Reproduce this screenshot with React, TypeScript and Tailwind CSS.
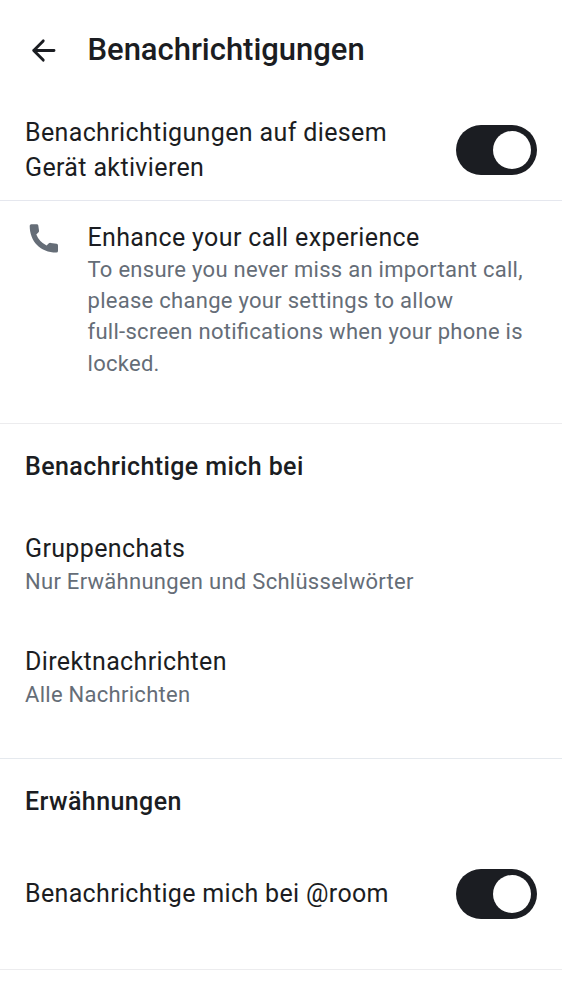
import type { ReactNode } from "react";

function Toggle() {
  return (
    <div role="switch" aria-checked="true" className="flex h-[50px] w-[81px] shrink-0 items-center justify-end rounded-full bg-[#1b1d22] pr-[6px]">
      <div className="size-[38px] rounded-full bg-white" />
    </div>
  );
}

function Heading({ children }: { children: ReactNode }) {
  return <h2 className="text-[25px] leading-[34px] font-medium tracking-[0.41px]">{children}</h2>;
}

function Setting({ title, detail }: { title: string; detail: string }) {
  return (
    <div className="flex flex-col px-[25px]">
      <div className="text-[25px] leading-[34px] tracking-[0.36px]">{title}</div>
      <div className="text-[22px] leading-[31px] tracking-[0.28px] text-[#656d77]">{detail}</div>
    </div>
  );
}

export default function App() {
  return (
    <main className="h-[1000px] w-[562px] overflow-hidden bg-white font-['Roboto',sans-serif] text-[#1b1d22]">
      <header className="flex h-[100px] items-center px-[25px]">
        <svg viewBox="0 0 37 37" className="size-[37px]" fill="none" stroke="currentColor" strokeWidth="2.9" strokeLinecap="round" strokeLinejoin="round">
          <path d="M18.2 8.9 8.7 18.5l9.5 9.6M8.7 18.5H29" />
        </svg>
        <h1 className="ml-[25.5px] text-[31px] leading-[40px] font-medium tracking-[-0.02px]">Benachrichtigungen</h1>
      </header>
      <section className="flex h-[101px] items-center justify-between border-b border-[#e5e7ee] px-[25px]">
        <div className="w-[400px] text-[25px] leading-[35px] tracking-[0.36px]">Benachrichtigungen auf diesem<br />Gerät aktivieren</div>
        <Toggle />
      </section>
      <section className="flex h-[223px] border-b border-[#ececee] pt-[19px] pl-[25px]">
        <svg viewBox="0 0 37 37" className="size-[37px] shrink-0" fill="#656d77">
          <path d="M6.3 4.2H11.8Q13.1 4.2 13.3 5.4L14 10.4Q14.2 11.6 13.3 12.5L11.3 14.5Q14 21.5 21.6 25.6L23.6 23.6Q24.4 22.7 25.7 22.9L31.6 23.8Q33 24 33 25.5V31Q33 32.6 31.3 32.6C15.5 32.6 4.7 21.5 4.7 5.8Q4.7 4.2 6.3 4.2Z" />
        </svg>
        <div className="ml-[25.5px] whitespace-nowrap">
          <div className="h-[34px] pt-px text-[25px] leading-[34px] tracking-[0.36px]">Enhance your call experience</div>
          <div className="text-[22px] leading-[31.2px] tracking-[0.28px] text-[#656d77] [font-feature-settings:'liga'_1]">To ensure you never miss an important call,<br />please change your settings to allow<br />full-screen notifications when your phone is<br />locked.</div>
        </div>
      </section>
      <section className="h-[335px] border-b border-[#e5e9ee]">
        <div className="mb-[48px] px-[25px] pt-[26px]"><Heading>Benachrichtige mich bei</Heading></div>
        <div className="flex flex-col gap-[48px]">
          <Setting title="Gruppenchats" detail="Nur Erwähnungen und Schlüsselwörter" />
          <Setting title="Direktnachrichten" detail="Alle Nachrichten" />
        </div>
      </section>
      <section className="h-[211px] border-b border-[#ececee] px-[25px] pt-[26px]">
        <Heading>Erwähnungen</Heading>
        <div className="mt-[50px] flex items-center justify-between">
          <div className="text-[25px] leading-[34px] tracking-[0.34px]">Benachrichtige mich bei @room</div>
          <Toggle />
        </div>
      </section>
    </main>
  );
}
